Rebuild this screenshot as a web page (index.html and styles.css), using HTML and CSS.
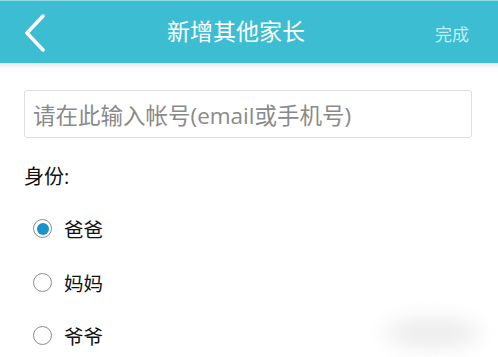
FILE: index.html
```html
<!DOCTYPE html>
<html lang="zh-CN">
<head>
    <meta charset="UTF-8">
    <meta name="viewport" content="width=device-width, initial-scale=1.0">
    <title>新增其他家长</title>
    <link rel="stylesheet" href="styles.css">
</head>
<body>
    <div class="topbar">
        <div class="back">
            <svg width="24" height="38" viewBox="0 0 24 38">
                <path d="M20 2 L4 19 L20 36" fill="none" stroke="#ffffff" stroke-width="3.5" stroke-linecap="round" stroke-linejoin="round"/>
            </svg>
        </div>
        <div class="title">新增其他家长</div>
        <div class="done">完成</div>
    </div>
    <div class="shade"></div>
    <div class="content">
        <div class="account">请在此输入帐号(email或手机号)</div>
        <div class="label">身份:</div>
        <div class="option"><span class="radio checked"></span>爸爸</div>
        <div class="option"><span class="radio"></span>妈妈</div>
        <div class="option"><span class="radio"></span>爷爷</div>
    </div>
    <div class="smudge"></div>
</body>
</html>
```

FILE: styles.css
```css
body{
    margin: 0;
    background: #ffffff;
    font-family: "Open Sans", "Noto Sans CJK SC", sans-serif;
    overflow: hidden;
    height: 357px;
    position: relative;
}

.topbar{
    height: 63px;
    background: #3dbdd2;
    border-top: 1px solid #8ddbe6;
    box-sizing: border-box;
    display: flex;
    align-items: center;
    position: relative;
}

.back{
    width: 24px;
    height: 38px;
    margin-left: 23px;
    margin-top: 2px;
}

.title{
    position: absolute;
    left: 0;
    right: 26px;
    text-align: center;
    color: #ffffff;
    font-size: 23px;
    line-height: 63px;
    top: -1px;
}

.done{
    margin-left: auto;
    margin-right: 29px;
    color: #c4eef5;
    font-size: 17px;
    margin-top: 2px;
}

.shade{
    height: 6px;
    background: linear-gradient(#e6e6e6, #ffffff);
}

.content{
    padding: 21px 26px 0 24px;
}

.account{
    height: 48px;
    border: 1px solid #dedede;
    border-radius: 3px;
    box-sizing: border-box;
    padding-left: 8px;
    display: flex;
    align-items: center;
    font-size: 22.5px;
    color: #8a8a8a;
    white-space: nowrap;
}

.label{
    margin-top: 25px;
    font-size: 20px;
    color: #111111;
    line-height: 28px;
}

.option{
    display: flex;
    align-items: center;
    height: 53.5px;
    font-size: 19.5px;
    color: #111111;
    padding-left: 9px;
}

.label + .option{
    margin-top: 11px;
}

.radio{
    width: 19px;
    height: 19px;
    border: 1.5px solid #8c8c8c;
    border-radius: 50%;
    box-sizing: border-box;
    margin-right: 12px;
    display: flex;
    align-items: center;
    justify-content: center;
}

.radio.checked::after{
    content: "";
    width: 12px;
    height: 12px;
    border-radius: 50%;
    background: #1b92cc;
}

.smudge{
    position: absolute;
    left: 385px;
    top: 318px;
    width: 95px;
    height: 30px;
    border-radius: 50%;
    background: #ececec;
    filter: blur(10px);
}
```
